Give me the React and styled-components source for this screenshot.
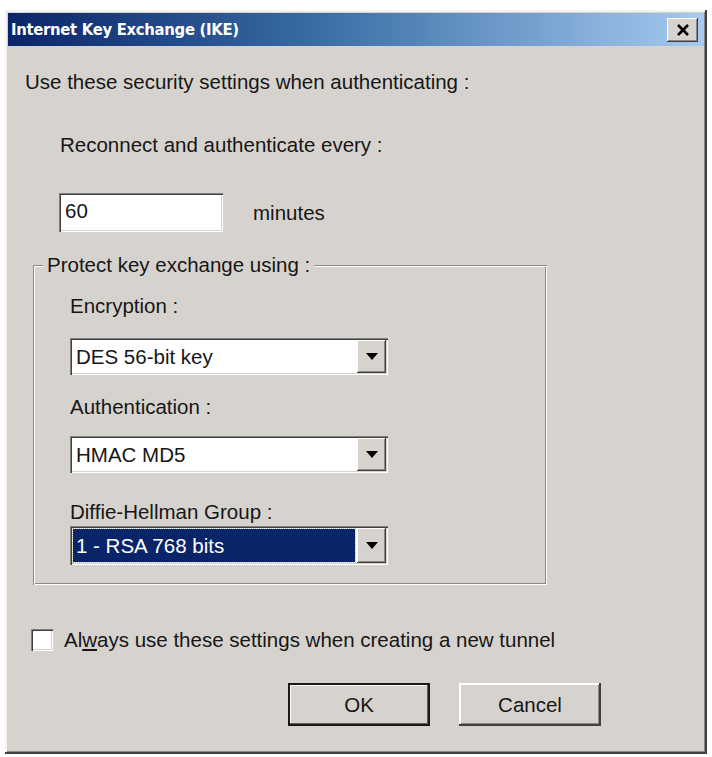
import React from 'react'
import styled, { createGlobalStyle } from 'styled-components'

const GlobalStyle = createGlobalStyle`
  body {
    margin: 0;
    background: #ffffff;
    font-family: "Liberation Sans", Arial, sans-serif;
  }
`;

const Page = styled.div`
  padding: 10px 5px 3px 5px;
`;

const Window = styled.div`
  width: 702px;
  height: 744px;
  box-sizing: border-box;
  background: #d6d3ce;
  padding: 3px;
  box-shadow: inset -2px -2px 0 #404040, inset 2px 2px 0 #f4f3f0, inset -3px -3px 0 #8a8884;
  display: flex;
  flex-direction: column;
`;

const TitleBar = styled.div`
  height: 33px;
  display: flex;
  align-items: center;
  justify-content: space-between;
  padding: 0 6px 0 3px;
  background: linear-gradient(to right, #0a246a 0%, #3a6ea5 45%, #a6caf0 100%);
`;

const Title = styled.span`
  color: #ffffff;
  font-family: "DejaVu Sans Condensed", "DejaVu Sans", sans-serif;
  font-weight: bold;
  font-size: 16.5px;
  letter-spacing: -0.3px;
`;

const CloseButton = styled.div`
  width: 31px;
  height: 24px;
  box-sizing: border-box;
  background: #d6d3ce;
  box-shadow: inset -1px -1px 0 #404040, inset 1px 1px 0 #ffffff, inset -2px -2px 0 #8a8884;
  display: flex;
  align-items: center;
  justify-content: center;
`;

const Body = styled.div`
  padding: 25px 0 0 17px;
  color: #161616;
  font-size: 20.5px;
  display: flex;
  flex-direction: column;
`;

const Label = styled.div`
  line-height: 22px;
  margin-top: ${p => p.$top || 0}px;
  margin-left: ${p => p.$indent || 0}px;
`;

const InputRow = styled.div`
  display: flex;
  align-items: center;
  gap: 30px;
  margin: 37px 0 0 34px;
`;

const sunken = `
  background: #ffffff;
  box-sizing: border-box;
  box-shadow: inset 1px 1px 0 #808080, inset 2px 2px 0 #404040, inset -1px -1px 0 #ffffff, inset -2px -2px 0 #d6d3ce;
`;

const TextBox = styled.div`
  ${sunken}
  width: 164px;
  height: 39px;
  padding: 7px 0 0 6px;
  line-height: 22px;
`;

const GroupBox = styled.fieldset`
  width: 514px;
  box-sizing: border-box;
  margin: 22px 0 0 8px;
  padding: 0 0 20px 37px;
  border: 0;
  box-shadow: inset 1px 1px 0 #8a8884, inset 2px 2px 0 #ffffff, inset -1px -1px 0 #ffffff, inset -2px -2px 0 #8a8884;
  display: flex;
  flex-direction: column;
`;

const Legend = styled.legend`
  padding: 0 4px;
  margin-left: -27px;
  line-height: 22px;
  font-size: 20.5px;
  background: #d6d3ce;
`;

const Select = styled.div`
  ${sunken}
  width: 318px;
  height: ${p => p.$height || 37}px;
  margin-top: ${p => p.$top}px;
  display: flex;
  align-items: stretch;
  padding: 2px;
`;

const SelectValue = styled.div`
  flex: 1;
  display: flex;
  align-items: center;
  padding-left: 3px;
  margin: 1px 2px 1px 1px;
  background: ${p => (p.$active ? '#0a246a' : 'transparent')};
  color: ${p => (p.$active ? '#ffffff' : '#161616')};
  outline: ${p => (p.$active ? '1px dotted #c8c090' : 'none')};
`;

const ArrowButton = styled.div`
  width: 29px;
  background: #d6d3ce;
  box-shadow: inset -1px -1px 0 #404040, inset 1px 1px 0 #ffffff, inset -2px -2px 0 #8a8884;
  display: flex;
  align-items: center;
  justify-content: center;
`;

const Arrow = styled.div`
  width: 0;
  height: 0;
  border-left: 6px solid transparent;
  border-right: 6px solid transparent;
  border-top: 7px solid #000;
`;

const CheckRow = styled.div`
  display: flex;
  align-items: center;
  gap: 11px;
  margin: 43px 0 0 6px;
`;

const CheckBox = styled.div`
  ${sunken}
  width: 22px;
  height: 22px;
`;

const Buttons = styled.div`
  display: flex;
  gap: 29px;
  margin: 31px 0 0 263px;
`;

const Button = styled.div`
  width: 142px;
  height: 43px;
  box-sizing: border-box;
  display: flex;
  align-items: center;
  justify-content: center;
  background: #d6d3ce;
  box-shadow: ${p => (p.$default
    ? 'inset 0 0 0 2px #1a1a1a, inset -3px -3px 0 #606060, inset 3px 3px 0 #ffffff'
    : 'inset -2px -2px 0 #404040, inset 2px 2px 0 #ffffff, inset -3px -3px 0 #8a8884')};
`;

const U = styled.span`
  text-decoration: underline;
`;

function Dropdown({ value, top, height, active }) {
  return (
    <Select $top={top} $height={height}>
      <SelectValue $active={active}>{value}</SelectValue>
      <ArrowButton><Arrow /></ArrowButton>
    </Select>
  );
}

export default function App() {
  return (
    <Page>
      <GlobalStyle />
      <Window>
        <TitleBar>
          <Title>Internet Key Exchange (IKE)</Title>
          <CloseButton>
            <svg width="14" height="12" viewBox="0 0 14 12">
              <path d="M2 1 L12 11 M12 1 L2 11" stroke="#000" strokeWidth="2.6" />
            </svg>
          </CloseButton>
        </TitleBar>
        <Body>
          <Label>Use these security settings when authenticating :</Label>
          <Label $top={41} $indent={35}>Reconnect and authenticate every :</Label>
          <InputRow>
            <TextBox>60</TextBox>
            <span>minutes</span>
          </InputRow>
          <GroupBox>
            <Legend>Protect key exchange using :</Legend>
            <Label $top={19}>Encryption :</Label>
            <Dropdown top={21} value="DES 56-bit key" />
            <Label $top={21}>Authentication :</Label>
            <Dropdown top={18} value="HMAC MD5" />
            <Label $top={28}>Diffie-Hellman Group :</Label>
            <Dropdown top={3} height={39} value="1 - RSA 768 bits" active />
          </GroupBox>
          <CheckRow>
            <CheckBox />
            <span>Al<U>w</U>ays use these settings when creating a new tunnel</span>
          </CheckRow>
          <Buttons>
            <Button $default>OK</Button>
            <Button>Cancel</Button>
          </Buttons>
        </Body>
      </Window>
    </Page>
  );
}
